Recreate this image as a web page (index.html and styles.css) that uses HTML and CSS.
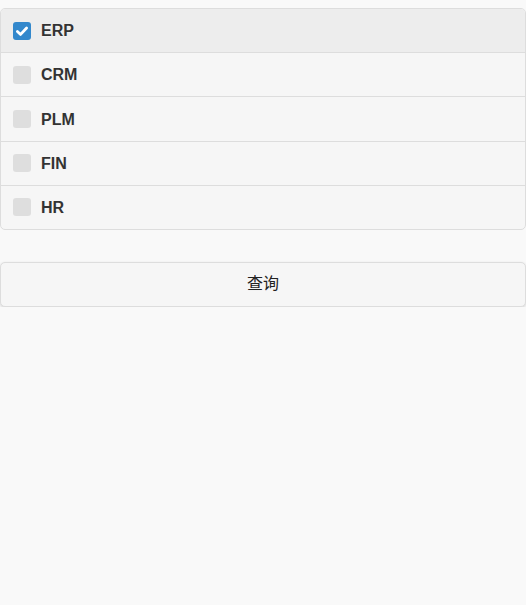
FILE: index.html
```html
<!DOCTYPE html>
<html>
<head>
<meta charset="utf-8">
<link rel="stylesheet" href="styles.css">
</head>
<body>
<div class="page">
  <div class="group">
    <label class="row checked"><span class="box on"><svg viewBox="0 0 18 18" width="18" height="18"><path d="M4.4 9.4 L7.6 12.4 L13.6 6" fill="none" stroke="#fff" stroke-width="2.8" stroke-linecap="round" stroke-linejoin="round"/></svg></span><span class="txt">ERP</span></label>
    <label class="row"><span class="box"></span><span class="txt">CRM</span></label>
    <label class="row"><span class="box"></span><span class="txt">PLM</span></label>
    <label class="row"><span class="box"></span><span class="txt">FIN</span></label>
    <label class="row"><span class="box"></span><span class="txt">HR</span></label>
  </div>
  <button class="btn">查询</button>
</div>
</body>
</html>
```
FILE: styles.css
```css
html, body {
  margin: 0;
  padding: 0;
  background: #f9f9f9;
  font-family: "Liberation Sans", Arial, "Noto Sans CJK SC", sans-serif;
  color: #333;
}
.page {
  padding-top: 8px;
}
.group {
  border: 1px solid #dddddd;
  border-radius: 5px;
  background: #f6f6f6;
  overflow: hidden;
}
.row {
  display: flex;
  align-items: center;
  gap: 10px;
  padding: 12.2px 12px 10.2px 12px;
  font-size: 16px;
  line-height: 20.8px;
  font-weight: bold;
  text-shadow: 0 1px 0 #f3f3f3;
  border-top: 1px solid #dddddd;
}
.row:first-child {
  border-top: none;
}
.row.checked {
  background: #ededed;
}
.box {
  width: 18px;
  height: 18px;
  margin: 0 0 2px 0;
  border-radius: 3px;
  background: #dedede;
  display: block;
  flex: none;
}
.box.on {
  background: #3388cc;
}
.box svg {
  display: block;
}
.btn {
  display: block;
  width: 100%;
  margin: 32px 0 0;
  padding: 11.2px 16px;
  font-family: "Liberation Sans", Arial, "Noto Sans CJK SC", sans-serif;
  font-size: 16px;
  line-height: 20.8px;
  font-weight: normal;
  color: #222;
  background: #f6f6f6;
  border: 1px solid #dddddd;
  border-radius: 5px;
  box-shadow: 0 1px 3px rgba(0,0,0,0.15);
  text-shadow: 0 1px 0 #f3f3f3;
}
```
